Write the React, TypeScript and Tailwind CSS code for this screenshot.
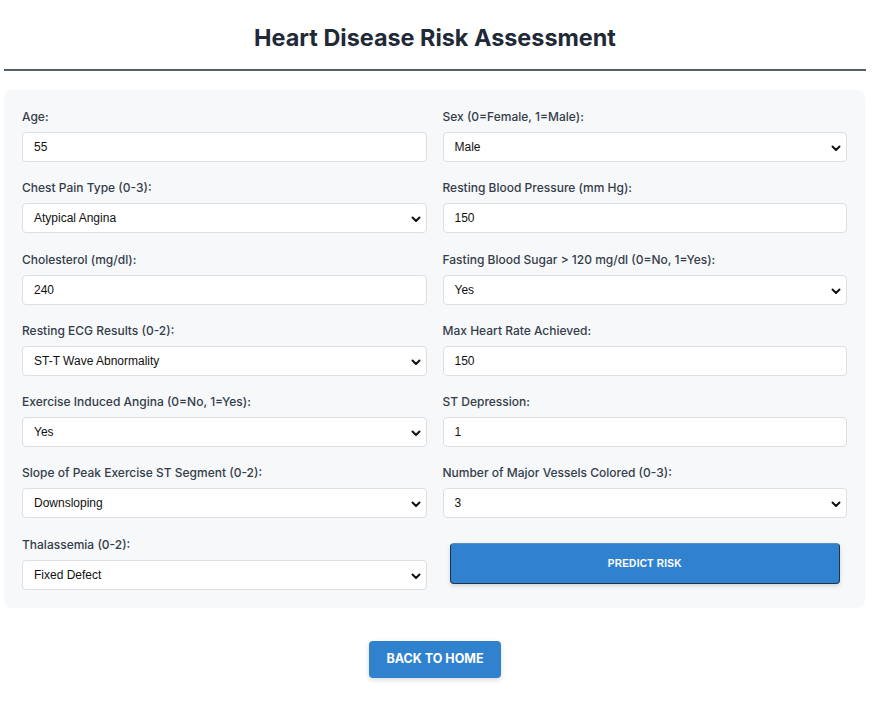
import React from "react";

type Field = { label: string; value: string; select?: boolean };

const fields: Field[] = [
  { label: "Age:", value: "55" },
  { label: "Sex (0=Female, 1=Male):", value: "Male", select: true },
  { label: "Chest Pain Type (0-3):", value: "Atypical Angina", select: true },
  { label: "Resting Blood Pressure (mm Hg):", value: "150" },
  { label: "Cholesterol (mg/dl):", value: "240" },
  { label: "Fasting Blood Sugar > 120 mg/dl (0=No, 1=Yes):", value: "Yes", select: true },
  { label: "Resting ECG Results (0-2):", value: "ST-T Wave Abnormality", select: true },
  { label: "Max Heart Rate Achieved:", value: "150" },
  { label: "Exercise Induced Angina (0=No, 1=Yes):", value: "Yes", select: true },
  { label: "ST Depression:", value: "1" },
  { label: "Slope of Peak Exercise ST Segment (0-2):", value: "Downsloping", select: true },
  { label: "Number of Major Vessels Colored (0-3):", value: "3", select: true },
  { label: "Thalassemia (0-2):", value: "Fixed Defect", select: true },
];

function Chevron() {
  return (
    <svg width="10" height="7" viewBox="0 0 10 7" className="absolute right-[5px] top-[12px]">
      <path d="M1.5 1.5 L5 5 L8.5 1.5" fill="none" stroke="#111" strokeWidth="2" strokeLinecap="round" strokeLinejoin="round" />
    </svg>
  );
}

function FieldBox({ f }: { f: Field }) {
  return (
    <div className="flex flex-col">
      <label className="text-[12px] leading-[18px] font-medium text-[#353d49] font-['Inter',sans-serif]">{f.label}</label>
      <div className="relative mt-[6px] h-[30px] rounded-[4px] border border-[#dcdfe3] bg-white">
        <div className="pl-[11px] text-[12px] leading-[28px] text-[#111] font-['Liberation_Sans',Arial,sans-serif]">{f.value}</div>
        {f.select && <Chevron />}
      </div>
    </div>
  );
}

export default function App() {
  return (
    <div className="w-[880px] h-[712px] bg-white font-['Inter',sans-serif]">
      <div className="pt-[22px] px-[4px] w-[870px]">
        <h1 className="text-center text-[23.4px] leading-[32px] font-bold text-[#1f2937]">Heart Disease Risk Assessment</h1>
        <div className="mt-[15px] h-[2px] bg-[#565f69]" />
        <div className="mt-[19px] w-[861px] rounded-[8px] bg-[#f6f8fa] px-[18px] pt-[18px] pb-[18px]">
          <div className="grid grid-cols-2 gap-x-[16px] gap-y-[17.3px]">
            {fields.map((f, i) => (
              <FieldBox key={i} f={f} />
            ))}
            <div className="flex items-center px-[7px] pt-[2px]">
              <button className="h-[41px] w-full rounded-[4px] bg-[#3182ce] border border-[#1c3550] border-t-[#5b8fc4] shadow-[0_2px_4px_rgba(0,0,0,0.15)] text-[10px] font-bold tracking-[0.3px] text-white font-['Liberation_Sans',Arial,sans-serif]">
                PREDICT RISK
              </button>
            </div>
          </div>
        </div>
        <div className="mt-[33px] flex justify-center">
          <button className="h-[37px] w-[132px] rounded-[4px] bg-[#3182ce] shadow-[0_2px_5px_rgba(0,0,0,0.15)] text-[12.5px] font-bold text-white">
            BACK TO HOME
          </button>
        </div>
      </div>
    </div>
  );
}
